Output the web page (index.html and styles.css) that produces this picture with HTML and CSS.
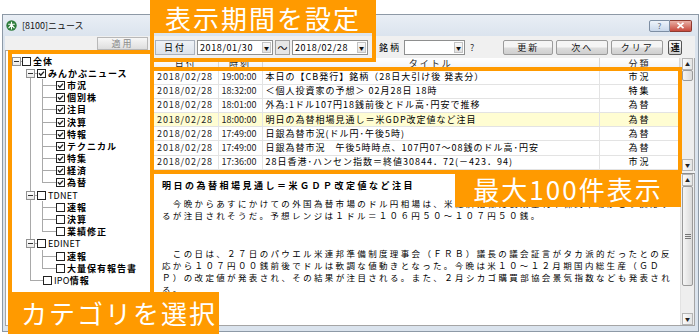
FILE: index.html
```html
<!DOCTYPE html>
<html lang="ja">

<head>
    <meta charset="UTF-8">
    <title>[8100]ニュース</title>
    <link rel="stylesheet" href="styles.css">
</head>

<body>
    <div class="window">
        <!-- タイトルバー -->
        <div class="titlebar">
            <svg class="app-icon" width="11" height="11" viewBox="0 0 11 11">
                <circle cx="5.5" cy="5.5" r="5.2" fill="#2f7d3c"/>
                <path d="M2.2 4.2h6.6M5.5 1.8v7.6M5.5 4.6 2.6 8.2M5.5 4.6l2.9 3.6" stroke="#fff" stroke-width="1.1" fill="none"/>
            </svg>
            <span class="title">[8100]ニュース</span>
            <span class="tb-help">?</span>
            <span class="tb-close">
                <svg width="9" height="7" viewBox="0 0 9 7"><path d="M1.5 .8 7.5 6.2M7.5 .8 1.5 6.2" stroke="#fff" stroke-width="1.6"/></svg>
            </span>
        </div>

        <div class="client">
            <!-- 左：カテゴリ -->
            <div class="left">
                <div class="apply-bar"><button class="apply">適用</button></div>
                <div class="tree">
                    <div class="row l0"><span class="exp"></span><span class="hl w1"></span><span class="cb"></span><span class="lb b">全体</span></div>
                    <div class="g g1">
                        <div class="row l1"><span class="exp"></span><span class="hl w2"></span><svg class="cb-on" viewBox="0 0 9 9"><rect x=".5" y=".5" width="8" height="8" fill="#fff" stroke="#222"/><path d="M2 4.3 3.8 6.2 7 2.6" fill="none" stroke="#222" stroke-width="1.4"/></svg><span class="lb b">みんかぶニュース</span></div>
                        <div class="g g2">
                            <div class="row l2"><span class="hl w8"></span><svg class="cb-on" viewBox="0 0 9 9"><rect x=".5" y=".5" width="8" height="8" fill="#fff" stroke="#222"/><path d="M2 4.3 3.8 6.2 7 2.6" fill="none" stroke="#222" stroke-width="1.4"/></svg><span class="lb b">市況</span></div>
                            <div class="row l2"><span class="hl w8"></span><svg class="cb-on" viewBox="0 0 9 9"><rect x=".5" y=".5" width="8" height="8" fill="#fff" stroke="#222"/><path d="M2 4.3 3.8 6.2 7 2.6" fill="none" stroke="#222" stroke-width="1.4"/></svg><span class="lb b">個別株</span></div>
                            <div class="row l2"><span class="hl w8"></span><svg class="cb-on" viewBox="0 0 9 9"><rect x=".5" y=".5" width="8" height="8" fill="#fff" stroke="#222"/><path d="M2 4.3 3.8 6.2 7 2.6" fill="none" stroke="#222" stroke-width="1.4"/></svg><span class="lb b">注目</span></div>
                            <div class="row l2"><span class="hl w8"></span><svg class="cb-on" viewBox="0 0 9 9"><rect x=".5" y=".5" width="8" height="8" fill="#fff" stroke="#222"/><path d="M2 4.3 3.8 6.2 7 2.6" fill="none" stroke="#222" stroke-width="1.4"/></svg><span class="lb b">決算</span></div>
                            <div class="row l2"><span class="hl w8"></span><svg class="cb-on" viewBox="0 0 9 9"><rect x=".5" y=".5" width="8" height="8" fill="#fff" stroke="#222"/><path d="M2 4.3 3.8 6.2 7 2.6" fill="none" stroke="#222" stroke-width="1.4"/></svg><span class="lb b">特報</span></div>
                            <div class="row l2"><span class="hl w8"></span><svg class="cb-on" viewBox="0 0 9 9"><rect x=".5" y=".5" width="8" height="8" fill="#fff" stroke="#222"/><path d="M2 4.3 3.8 6.2 7 2.6" fill="none" stroke="#222" stroke-width="1.4"/></svg><span class="lb b">テクニカル</span></div>
                            <div class="row l2"><span class="hl w8"></span><svg class="cb-on" viewBox="0 0 9 9"><rect x=".5" y=".5" width="8" height="8" fill="#fff" stroke="#222"/><path d="M2 4.3 3.8 6.2 7 2.6" fill="none" stroke="#222" stroke-width="1.4"/></svg><span class="lb b">特集</span></div>
                            <div class="row l2"><span class="hl w8"></span><svg class="cb-on" viewBox="0 0 9 9"><rect x=".5" y=".5" width="8" height="8" fill="#fff" stroke="#222"/><path d="M2 4.3 3.8 6.2 7 2.6" fill="none" stroke="#222" stroke-width="1.4"/></svg><span class="lb b">経済</span></div>
                            <div class="row l2"><span class="hl w8"></span><svg class="cb-on" viewBox="0 0 9 9"><rect x=".5" y=".5" width="8" height="8" fill="#fff" stroke="#222"/><path d="M2 4.3 3.8 6.2 7 2.6" fill="none" stroke="#222" stroke-width="1.4"/></svg><span class="lb b">為替</span></div>
                        </div>
                        <div class="row l1"><span class="exp"></span><span class="hl w2"></span><span class="cb"></span><span class="lb latin">TDNET</span></div>
                        <div class="g g2">
                            <div class="row l2"><span class="hl w8"></span><span class="cb"></span><span class="lb b">速報</span></div>
                            <div class="row l2"><span class="hl w8"></span><span class="cb"></span><span class="lb b">決算</span></div>
                            <div class="row l2"><span class="hl w8"></span><span class="cb"></span><span class="lb b">業績修正</span></div>
                        </div>
                        <div class="row l1"><span class="exp"></span><span class="hl w2"></span><span class="cb"></span><span class="lb latin">EDINET</span></div>
                        <div class="g g2">
                            <div class="row l2"><span class="hl w8"></span><span class="cb"></span><span class="lb b">速報</span></div>
                            <div class="row l2"><span class="hl w8"></span><span class="cb"></span><span class="lb b">大量保有報告書</span></div>
                        </div>
                        <div class="row l1-leaf"><span class="hl w7"></span><span class="cb"></span><span class="lb latin">IPO<b>情報</b></span></div>
                    </div>
                </div>
            </div>

            <!-- 右：一覧と本文 -->
            <div class="right">
                <div class="toolbar">
                    <span class="lbl">日付</span>
                    <span class="combo date"><span class="val">2018/01/30</span><span class="drop">&#9660;</span></span>
                    <span class="tilde">～</span>
                    <span class="combo date"><span class="val">2018/02/28</span><span class="drop">&#9660;</span></span>
                    <span class="meigara">銘柄</span>
                    <span class="combo code"><span class="val"></span><span class="drop">&#9660;</span></span>
                    <span class="qmark">?</span>
                    <button class="btn btn-update">更新</button>
                    <button class="btn">次へ</button>
                    <button class="btn">クリア</button>
                    <button class="btn btn-ren">連</button>
                </div>

                <div class="list">
                    <table class="grid">
                        <colgroup><col class="col-date"><col class="col-time"><col><col class="col-cat"></colgroup>
                        <tr><th>日付</th><th>時刻</th><th>タイトル</th><th>分類</th></tr>
                        <tr><td class="d">2018/02/28</td><td class="t">19:00:00</td><td>本日の【CB発行】銘柄（28日大引け後 発表分）</td><td class="k">市況</td></tr>
                        <tr><td class="d">2018/02/28</td><td class="t">18:32:00</td><td>＜個人投資家の予想＞ 02月28日 18時</td><td class="k">特集</td></tr>
                        <tr><td class="d">2018/02/28</td><td class="t">18:01:00</td><td>外為:1ドル107円18銭前後とドル高･円安で推移</td><td class="k">為替</td></tr>
                        <tr class="hi"><td class="d">2018/02/28</td><td class="t">18:00:00</td><td>明日の為替相場見通し＝米GDP改定値など注目</td><td class="k">為替</td></tr>
                        <tr><td class="d">2018/02/28</td><td class="t">17:49:00</td><td>日銀為替市況(ドル円･午後5時)</td><td class="k">為替</td></tr>
                        <tr><td class="d">2018/02/28</td><td class="t">17:49:00</td><td>日銀為替市況　午後5時時点、107円07～08銭のドル高･円安</td><td class="k">為替</td></tr>
                        <tr><td class="d">2018/02/28</td><td class="t">17:36:00</td><td>28日香港･ハンセン指数＝終値30844．72(－423．94)</td><td class="k">市況</td></tr>
                    </table>
                    <div class="vscroll">
                        <span class="sb-btn">&#9650;</span>
                        <span class="sb-thumb small"></span>
                        <span class="sb-track"></span>
                        <span class="sb-btn">&#9660;</span>
                    </div>
                </div>

                <div class="article">
                    <div class="article-body">
                        <p class="a-title">明日の為替相場見通し＝米ＧＤＰ改定値など注目</p>
                        <p class="a-text">　今晩からあすにかけての外国為替市場のドル円相場は、米経済指標に長期金利や株式市場がどう反応す<br>るが注目されそうだ。予想レンジは１ドル＝１０６円５０～１０７円５０銭。</p>
                        <p class="a-text second">　この日は、２７日のパウエル米連邦準備制度理事会（ＦＲＢ）議長の議会証言がタカ派的だったとの反<br>応から１０７円００銭前後でドルは軟調な値動きとなった。今晩は米１０～１２月期国内総生産（ＧＤ<br>Ｐ）の改定値が発表され、その結果が注目される。また、２月シカゴ購買部協会景気指数なども発表され<br>る。</p>
                    </div>
                    <div class="vscroll">
                        <span class="sb-btn">&#9650;</span>
                        <span class="sb-thumb big"><i></i><i></i><i></i></span>
                        <span class="sb-track"></span>
                        <span class="sb-btn">&#9660;</span>
                    </div>
                </div>
            </div>
        </div>
    </div>

    <!-- 説明用の枠と吹き出し -->
    <div class="frame f-period"></div>
    <div class="frame f-tree"></div>
    <div class="frame f-list"></div>
    <div class="callout c-period">表示期間を設定</div>
    <div class="callout c-cat">カテゴリを選択</div>
    <div class="callout c-max">最大100件表示</div>
</body>

</html>
```

FILE: styles.css
```css
/* ページ全体 */
* {
    box-sizing: border-box;
}

body {
    margin: 0;
    width: 700px;
    height: 334px;
    overflow: hidden;
    position: relative;
    background: #fff;
    font-family: "Noto Sans CJK JP", "Noto Sans", sans-serif;
    font-size: 9px;
    color: #000;
}

/* ウィンドウ枠 */
.window {
    margin: 14px 0 0 2px;
    width: 697px;
    height: 318px;
    border: 1px solid #8d99a6;
    background: #dae3ed;
    display: flex;
    flex-direction: column;
}

.titlebar {
    height: 21px;
    display: flex;
    align-items: center;
    padding: 0 6px 0 3px;
    background: linear-gradient(#e9eef5, #dbe4ee);
}

.app-icon {
    flex: none;
}

.title {
    margin-left: 5px;
    flex: 1;
    color: #111;
}

.tb-help {
    width: 21px;
    height: 12px;
    border: 1px solid #7d8ea3;
    border-radius: 2px 0 0 2px;
    background: linear-gradient(#eef4fb, #c8d7ea);
    color: #56657a;
    font-size: 8px;
    line-height: 10px;
    text-align: center;
}

.tb-close {
    width: 22px;
    height: 12px;
    border: 1px solid #8f3a30;
    border-left: none;
    border-radius: 0 2px 2px 0;
    background: linear-gradient(#eab0a6, #c8493c);
    display: flex;
    align-items: center;
    justify-content: center;
}

.client {
    flex: 1;
    display: flex;
    margin: 0 3px 5px 2px;
    background: #f0f0f0;
}

/* 左側：カテゴリツリー */
.left {
    width: 148px;
    display: flex;
    flex-direction: column;
}

.apply-bar {
    height: 14px;
    display: flex;
    justify-content: flex-end;
    padding: 1px 5px 0 0;
}

.apply {
    width: 51px;
    height: 13px;
    padding: 0;
    border: 1px solid #b8b8b8;
    background: linear-gradient(#f7f7f7, #dedede);
    color: #8a8a8a;
    font-family: inherit;
    font-size: 9px;
    letter-spacing: 2px;
    line-height: 11px;
}

.tree {
    flex: 1;
    position: relative;
    background: #fff;
    border: 1px solid #a5a5a5;
    padding-top: 4px;
}

.row {
    height: 12.2px;
    display: flex;
    align-items: center;
}

.l0 {
    padding-left: 6px;
}

.l1 {
    padding-left: 20px;
}

.l1-leaf {
    padding-left: 24px;
}

.l2 {
    padding-left: 36px;
}

/* ツリーの線 */
.g {
    position: relative;
}

.g::before {
    content: "";
    position: absolute;
    top: 0;
    bottom: 6px;
    width: 1px;
    background: #a9a9a9;
}

.g1::before {
    left: 24px;
    top: 6px;
}

.g2::before {
    left: 36px;
}

.hl {
    height: 1px;
    background: #a9a9a9;
    flex: none;
}

.w1 { width: 1px; }
.w2 { width: 2px; }
.w7 { width: 13px; }
.w8 { width: 14px; }

.exp {
    position: relative;
    width: 9px;
    height: 9px;
    flex: none;
    border: 1px solid #919191;
    background: linear-gradient(#fff, #e9e9e9);
    display: flex;
    align-items: center;
    justify-content: center;
}

.exp::after {
    content: "";
    width: 5px;
    height: 1px;
    background: #333;
}

.cb {
    width: 9px;
    height: 9px;
    flex: none;
    border: 1px solid #222;
    background: #fff;
}

.cb-on {
    width: 9px;
    height: 9px;
    flex: none;
}

.lb {
    margin-left: 2px;
    letter-spacing: 1px;
    white-space: nowrap;
}

.lb.latin {
    letter-spacing: 0.2px;
}

.lb.b,
.lb b {
    font-weight: bold;
    letter-spacing: 1px;
}

/* 右側 */
.right {
    flex: 1;
    display: flex;
    flex-direction: column;
}

.toolbar {
    height: 22px;
    display: flex;
    align-items: center;
    padding-left: 2px;
}

.lbl {
    width: 40px;
    height: 15px;
    border: 1px solid #a9b1bd;
    background: linear-gradient(#eef2f7, #dde3eb);
    text-align: center;
    line-height: 13px;
    letter-spacing: 2px;
}

.combo {
    height: 15px;
    margin-left: 2px;
    border: 1px solid #8e8f8f;
    background: #fff;
    display: flex;
    align-items: center;
    justify-content: space-between;
    padding: 0 1px 0 2px;
}

.date {
    width: 76px;
}

.code {
    width: 61px;
    margin-left: 3px;
}

.val {
    letter-spacing: 0.6px;
}

.drop {
    width: 9px;
    height: 11px;
    border: 1px solid #c3c3c3;
    background: linear-gradient(#fafafa, #e1e1e1);
    font-size: 5px;
    line-height: 9px;
    text-align: center;
    color: #111;
}

.tilde {
    width: 15px;
    height: 15px;
    margin-left: 2px;
    border: 1px solid #a0a0a0;
    background: #e6e6e6;
    text-align: center;
    line-height: 13px;
    font-size: 10px;
}

.meigara {
    margin-left: 11px;
    letter-spacing: 2px;
}

.qmark {
    margin-left: 5px;
    color: #333;
}

.btn {
    height: 15px;
    padding: 0;
    margin-left: 3px;
    border: 1px solid #9b9b9b;
    border-radius: 2px;
    background: linear-gradient(#f5f5f5 45%, #dcdcdc 55%, #cfcfcf);
    font-family: inherit;
    font-size: 9px;
    letter-spacing: 2px;
    line-height: 13px;
    width: 52px;
    color: #111;
}

.btn-update {
    margin-left: 29px;
    width: 50px;
}

.btn-ren {
    width: 14px;
    margin-left: 5px;
    letter-spacing: 0;
    font-weight: bold;
    border-color: #555;
}

/* 一覧 */
.list {
    height: 113px;
    display: flex;
    border-left: 1px solid #a5a5a5;
    border-right: 1px solid #a5a5a5;
    background: #fff;
}

.grid {
    flex: 1;
    border-collapse: collapse;
    table-layout: fixed;
    align-self: flex-start;
}

.col-date { width: 64px; }
.col-time { width: 44px; }
.col-cat { width: 80px; }

.grid th {
    height: 12px;
    padding: 0;
    font-weight: normal;
    letter-spacing: 2px;
    background: linear-gradient(#fff, #f0f1f3);
    border-right: 1px solid #d5d5d5;
    border-bottom: 1px solid #d5d5d5;
    color: #222;
    line-height: 10px;
}

.grid td {
    height: 14.2px;
    padding: 0 0 0 3px;
    border-right: 1px solid #e3e3e3;
    border-bottom: 1px solid #e3e3e3;
    white-space: nowrap;
    overflow: hidden;
    letter-spacing: 1px;
    line-height: 12px;
}

.grid td.d {
    letter-spacing: 0.9px;
    color: #222;
}

.grid td.t {
    letter-spacing: 0;
    color: #222;
}

.grid td.k {
    text-align: center;
    padding: 0;
    letter-spacing: 2px;
}

.grid tr.hi td {
    background: #fffdd2;
}

/* スクロールバー */
.vscroll {
    width: 14px;
    flex: none;
    display: flex;
    flex-direction: column;
    background: #eeeeee;
    border-left: 1px solid #e2e2e2;
}

.sb-btn {
    height: 12px;
    margin: 0 1px;
    border: 1px solid #b5b5b5;
    background: linear-gradient(90deg, #fbfbfb, #e4e4e4);
    font-size: 5px;
    line-height: 10px;
    text-align: center;
    color: #222;
}

.sb-thumb {
    margin: 0 1px;
    border: 1px solid #9a9a9a;
    border-radius: 2px;
    background: linear-gradient(90deg, #f6f6f6, #dadada);
    display: flex;
    flex-direction: column;
    align-items: center;
    justify-content: center;
    gap: 1px;
}

.sb-thumb.small {
    height: 11px;
}

.sb-thumb.big {
    height: 100px;
}

.sb-thumb i {
    width: 6px;
    height: 1px;
    background: #777;
}

.sb-track {
    flex: 1;
}

/* 本文 */
.article {
    flex: 1;
    margin-top: 2px;
    display: flex;
    border: 1px solid #a5a5a5;
    border-top-color: #8d8d8d;
    background: #fff;
}

.article-body {
    flex: 1;
    overflow: hidden;
    padding: 7px 0 0 8px;
    white-space: nowrap;
}

.article-body p {
    margin: 0;
}

.a-title {
    font-weight: bold;
    letter-spacing: 2.5px;
    line-height: 10px;
}

.article-body .a-text {
    font-size: 8.5px;
    letter-spacing: 2.35px;
    line-height: 12px;
    margin-top: 6px;
}

.article-body .a-text.second {
    margin-top: 26px;
}

/* 説明用の枠と吹き出し */
.frame {
    position: absolute;
    border: 4px solid #ff9a00;
}

.f-period {
    left: 150px;
    top: 29px;
    width: 226px;
    height: 33px;
}

.f-tree {
    left: 8px;
    top: 50px;
    width: 146px;
    height: 246px;
}

.f-list {
    left: 150px;
    top: 67px;
    width: 532px;
    height: 107px;
}

.callout {
    position: absolute;
    background: #ff9a00;
    color: #fff;
    font-size: 26px;
    letter-spacing: 2px;
    line-height: 1;
    display: flex;
    align-items: center;
    justify-content: center;
}

.c-period {
    left: 150px;
    top: 0;
    width: 226px;
    height: 33px;
    padding-top: 2px;
}

.c-cat {
    left: 8px;
    top: 292px;
    width: 211px;
    height: 42px;
    justify-content: flex-start;
    padding-left: 13px;
}

.c-max {
    left: 455px;
    top: 170px;
    width: 226px;
    height: 37px;
}
```
